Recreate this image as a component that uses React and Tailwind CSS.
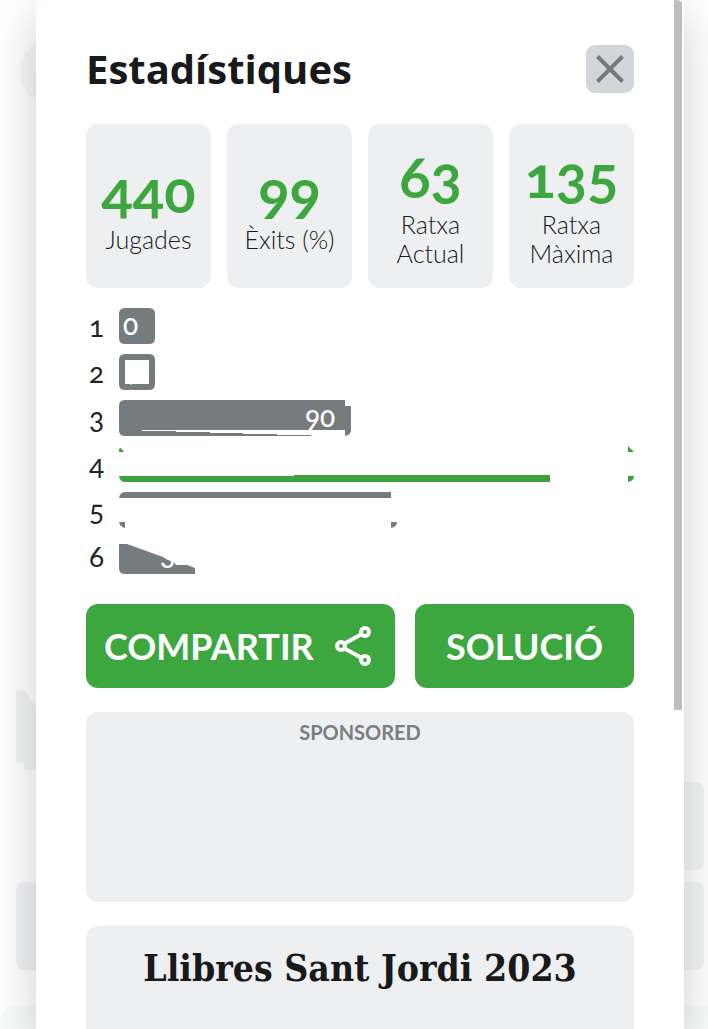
import React from "react"

const stats = [
  { value: "440", label: "Jugades" },
  { value: "99", label: "Èxits (%)" },
  { value: "63", label: "Ratxa Actual" },
  { value: "135", label: "Ratxa Màxima" },
]

const bars = [
  {
    attempt: 1,
    fill: "#767b7d",
    path: "M6 0H30Q36 0 36 6V30Q36 36 30 36H6Q0 36 0 30V6Q0 0 6 0Z",
    count: "0",
    x: 4,
    y: 27,
  },
  {
    attempt: 2,
    fill: "#767b7d",
    path: "M6 0H30Q36 0 36 6V30Q36 36 30 36H6Q0 36 0 30V6Q0 0 6 0ZM6 6V30H11L12 31L13 30H30V6Z",
  },
  {
    attempt: 3,
    fill: "#767b7d",
    path: "M6 0H226V6H232V30Q232 35 226 36V30H23V31H57V32H91V33H124V34H158V35H192V36H6Q0 36 0 30V6Q0 0 6 0Z",
    count: "90",
    x: 186,
    y: 27,
  },
  {
    attempt: 4,
    fill: "#3aa33a",
    path: "M0 6V3L2 2L5 6ZM0 30H175V29H431V36H6Q1 36 0 30ZM509 0L515 6H509ZM509 30H515Q515 35 509 36Z",
  },
  {
    attempt: 5,
    fill: "#767b7d",
    path: "M6 0H272V6H0Q1 0 6 0ZM0 30H6V36Q1 35 0 30ZM272 30H278Q278 35 272 36Z",
  },
  {
    attempt: 6,
    fill: "#767b7d",
    path: "M0 6H8L44 19L49 22L55 24L57 27H68L76 30V36H6Q0 36 0 30Z",
    count: "3",
    x: 41,
    y: 27,
  },
]

function Background() {
  return (
    <div aria-hidden="true" className="flex h-full flex-col">
      <div className="h-[38px]" />
      <div className="ml-5 size-[68px] rounded-full bg-[#f7f9f9]" />
      <svg className="mt-[584px] ml-4 h-20 w-20" viewBox="0 0 80 80" fill="#f2f3f4">
        <path d="M0 0H8L20 17V80H8V72H0Z" />
      </svg>
      <div className="mt-3 mr-1 flex h-[88px] justify-end">
        <div className="w-20 rounded-lg bg-[#f4f6f6]" />
      </div>
      <div className="mt-3 mr-1 ml-4 flex h-[88px] justify-between">
        <div className="w-20 rounded-lg bg-[#f1f2f4]" />
        <div className="w-20 rounded-lg bg-[#f4f6f6]" />
      </div>
      <div className="mt-9 flex-1 rounded-tl-2xl bg-[#f9fbfa]" />
    </div>
  )
}

function Guesses() {
  return (
    <ul className="mt-5 flex flex-col gap-[10px]">
      {bars.map((bar) => (
        <li key={bar.attempt} className="flex h-9 items-center">
          <span className="w-[33px] pl-[3px] text-[28px] leading-[34px] text-[#222425]">{bar.attempt}</span>
          <svg className="min-w-0 flex-1 overflow-visible" viewBox="0 0 515 36">
            <path d={bar.path} fill={bar.fill} fillRule="evenodd" />
            {bar.count && (
              <text x={bar.x} y={bar.y} fill="#fff" className="text-[28px] font-medium">
                {bar.count}
              </text>
            )}
          </svg>
        </li>
      ))}
    </ul>
  )
}

function App() {
  return (
    <div className="relative h-screen overflow-hidden bg-white font-[Lato,sans-serif] text-[#18191a] oldstyle-nums">
      <Background />

      <div className="absolute inset-0 pr-6 pl-9">
        <div
          role="dialog"
          aria-labelledby="stats-title"
          className="flex h-full overflow-hidden rounded-t-lg bg-white shadow-[0_16px_48px_rgba(0,0,0,0.2)]"
        >
          <main className="min-w-0 flex-1 pt-[45px] pr-10 pl-[50px]">
            <header className="flex h-12 items-center justify-between">
              <h1 id="stats-title" className="font-['Open_Sans',sans-serif] text-[40px] leading-[44px] font-bold">
                Estadístiques
              </h1>
              <button
                type="button"
                aria-label="Tanca"
                className="flex size-12 items-center justify-center rounded-[9px] bg-[#d2d6da]"
              >
                <svg className="size-7" viewBox="0 0 28 28" stroke="#75797c" strokeWidth="4">
                  <path d="M1.5 1.5L26.5 26.5M26.5 1.5L1.5 26.5" />
                </svg>
              </button>
            </header>

            <dl className="mt-[31px] grid grid-cols-4 gap-4">
              {stats.map((stat) => (
                <div
                  key={stat.label}
                  className="flex h-[164px] flex-col-reverse justify-center rounded-xl bg-[#edeff1] px-2 pb-[2px] text-center"
                >
                  <dt className="text-[25px] leading-[29px] font-light">{stat.label}</dt>
                  <dd className="text-[58px] leading-[68px] font-bold text-[#3ca73e]">{stat.value}</dd>
                </div>
              ))}
            </dl>

            <Guesses />

            <div className="mt-[30px] grid h-[84px] grid-cols-[309fr_219fr] gap-5 text-4xl font-bold text-white">
              <button
                type="button"
                className="flex items-center justify-between rounded-xl bg-[#3ca73e] pr-6 pl-[18px]"
              >
                COMPARTIR
                <svg className="h-10 w-9" viewBox="0 0 36 40" fill="none" stroke="#fff" strokeWidth="4">
                  <path d="M9.5 17.5L26 8.5M9.5 22.5L26 31.5" />
                  <circle cx="6" cy="20" r="4" />
                  <circle cx="30" cy="6" r="4" />
                  <circle cx="30" cy="34" r="4" />
                </svg>
              </button>
              <button type="button" className="rounded-xl bg-[#3ca73e]">
                SOLUCIÓ
              </button>
            </div>

            <section className="mt-6 h-[190px] rounded-xl bg-[#edeff1] pt-2 text-center">
              <p className="text-xl leading-6 font-bold text-[#7a7e80]">SPONSORED</p>
            </section>

            <section className="mt-6 h-[190px] rounded-xl bg-[#edeff1] pt-[18px] text-center">
              <h2 className="font-['DejaVu_Serif_Condensed','DejaVu_Serif',serif] text-[37px] leading-12 font-bold">
                Llibres Sant Jordi 2023
              </h2>
            </section>
          </main>
          <div aria-hidden="true" className="mr-[2px] h-[710px] w-2 bg-[#bdbdbd]" />
        </div>
      </div>
    </div>
  )
}

export default App
